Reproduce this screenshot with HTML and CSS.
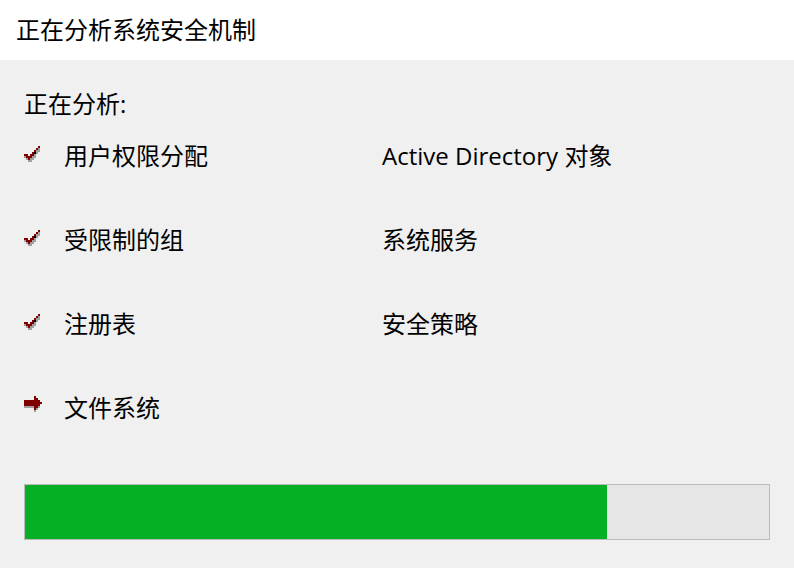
FILE: index.html
```html
<!DOCTYPE html>
<html lang="zh-CN">
<head>
<meta charset="utf-8">
<meta name="viewport" content="width=device-width, initial-scale=1">
<title>正在分析系统安全机制</title>
<link rel="stylesheet" href="styles.css">
</head>
<body>
<svg class="symbols" aria-hidden="true">
<symbol id="check" viewBox="0 0 10 10">
<path class="shade" d="M7 2h1v2h-1v1h-1v2h-1v1h-1v1h-2v-1h-1v-1h-1v-1h5v-2h1v-1h1z"/>
<path class="mark" d="M7 1h1v1h-1v1h-1v1h-1v2h-1v1h-1v1h-1v-1h-1v-1h-1v-1h2v1h1v-1h1v-1h1v-1h1v-1h1z"/>
<path class="dot" d="M5 4h1v1h-1z"/>
</symbol>
<symbol id="arrow" viewBox="0 0 10 10">
<path class="shade" d="M0 5h8v1h-1v1h-1v1h-1v-2h-5z"/>
<path class="mark" d="M5 0h1v1h1v1h1v1h1v1h-1v1h-1v1h-1v1h-1v-2h-5v-3h5z"/>
</symbol>
</svg>
<header class="titlebar"><h1>正在分析系统安全机制</h1></header>
<main class="content">
<h2 class="heading">正在分析:</h2>
<div class="columns">
<ul class="tasks">
<li><svg class="icon" role="img" aria-label="已完成"><use href="#check"/></svg>用户权限分配</li>
<li><svg class="icon" role="img" aria-label="已完成"><use href="#check"/></svg>受限制的组</li>
<li><svg class="icon" role="img" aria-label="已完成"><use href="#check"/></svg>注册表</li>
<li><svg class="icon" role="img" aria-label="进行中"><use href="#arrow"/></svg>文件系统</li>
</ul>
<ul class="tasks">
<li>Active Directory 对象</li>
<li>系统服务</li>
<li>安全策略</li>
</ul>
</div>
<div class="progress" role="progressbar" aria-label="分析进度" aria-valuemin="0" aria-valuemax="100" aria-valuenow="78"><div class="bar" style="width:78.2%"></div></div>
</main>
</body>
</html>
```
FILE: styles.css
```css
* { box-sizing: border-box; }
body { margin: 0; min-height: 100vh; background: #f0f0f0; color: #000; font: 24px/36px "Open Sans", "Noto Sans CJK SC", sans-serif; }
h1, h2 { margin: 0; font-size: 24px; font-weight: 400; }
.symbols { display: none; }
.titlebar { background: #fff; padding: 12px 16px; }
.content { padding: 26px 24px 28px; }
.columns { display: grid; grid-template-columns: 48% 1fr; margin-top: 16px; }
.tasks { display: grid; grid-auto-rows: 36px; gap: 48px; align-content: start; margin: 0; padding: 0; list-style: none; }
.tasks li { display: flex; }
.icon { width: 20px; height: 20px; margin: 6px 20px 0 0; shape-rendering: crispEdges; }
.shade { fill: #a0a0a0; }
.mark { fill: #800000; }
.dot { fill: #000; }
.progress { height: 56px; margin-top: 58px; border: 1px solid #bcbcbc; background: #e6e6e6; }
.bar { height: 100%; background: #06b025; }
```
